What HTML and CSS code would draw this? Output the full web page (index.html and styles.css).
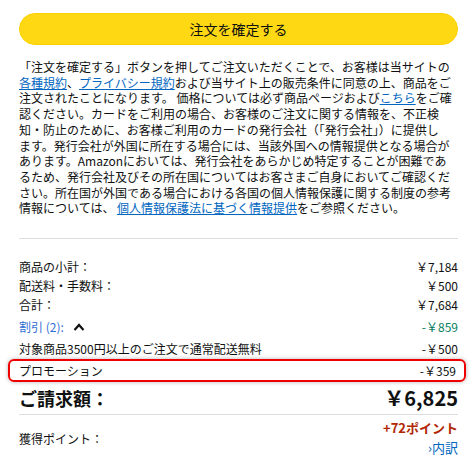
FILE: index.html
```html
<!DOCTYPE html>
<html lang="ja">
<head>
    <meta charset="UTF-8">
    <meta name="viewport" content="width=device-width, initial-scale=1.0">
    <title>注文の確定</title>
    <link rel="stylesheet" href="styles.css">
</head>
<body>
    <div class="checkout">
        <button class="place-order">注文を確定する</button>

        <p class="legal">
            「注文を確定する」ボタンを押してご注文いただくことで、お客様は当サイトの<br>
            <a href="#">各種規約</a>、<a href="#">プライバシー規約</a>および当サイト上の販売条件に同意の上、商品をご<br>
            注文されたことになります。 価格については必ず商品ページおよび<a href="#">こちら</a>をご確<br>
            認ください。カードをご利用の場合、お客様のご注文に関する情報を、不正検<br>
            知・防止のために、お客様ご利用のカードの発行会社（「発行会社」）に提供し<br>
            ます。発行会社が外国に所在する場合には、当該外国への情報提供となる場合が<br>
            あります。Amazonにおいては、発行会社をあらかじめ特定することが困難であ<br>
            るため、発行会社及びその所在国についてはお客さまご自身においてご確認くだ<br>
            さい。所在国が外国である場合における各国の個人情報保護に関する制度の参考<br>
            情報については、 <a href="#">個人情報保護法に基づく情報提供</a>をご参照ください。
        </p>

        <div class="summary">
            <div class="row">
                <span>商品の小計：</span>
                <span>￥7,184</span>
            </div>
            <div class="row">
                <span>配送料・手数料：</span>
                <span>￥500</span>
            </div>
            <div class="row">
                <span>合計：</span>
                <span>￥7,684</span>
            </div>
            <div class="row row-discount">
                <span class="discount-toggle">割引 (2):
                    <svg width="12" height="8" viewBox="0 0 12 8"><polyline points="1.5,7 6,2 10.5,7" fill="none" stroke="#0f1111" stroke-width="2.2"/></svg>
                </span>
                <span class="green">-￥859</span>
            </div>
            <div class="row row-item">
                <span>対象商品3500円以上のご注文で通常配送無料</span>
                <span>-￥500</span>
            </div>
            <div class="row row-promo">
                <span>プロモーション</span>
                <span>-￥359</span>
            </div>
            <div class="row row-total">
                <span>ご請求額：</span>
                <span class="total-price">￥6,825</span>
            </div>
        </div>

        <div class="points">
            <span>獲得ポイント：</span>
            <div class="points-right">
                <span class="points-value">+72ポイント</span>
                <a href="#" class="points-link">›内訳</a>
            </div>
        </div>
    </div>
</body>
</html>
```

FILE: styles.css
```css
body{
    margin: 0;
    background: #fff;
    color: #0f1111;
    font-family: "Noto Sans CJK JP", "Noto Sans", sans-serif;
}
.checkout{
    width: 439px;
    padding: 13px 15px 0 19px;
}
.place-order{
    display: block;
    width: 100%;
    height: 32px;
    border: 1px solid #fcd200;
    border-radius: 16px;
    background: #ffd814;
    color: #0f1111;
    font-family: inherit;
    font-size: 14px;
    padding: 0;
    cursor: pointer;
}
.legal{
    margin: 14px 0 0;
    font-size: 12px;
    line-height: 15.7px;
    padding-bottom: 22px;
    border-bottom: 1px solid #dddddd;
}
.legal a, .points-link{
    color: #0066c0;
}
.summary{
    padding-top: 19px;
    display: flex;
    flex-direction: column;
    font-size: 12px;
}
.row{
    display: flex;
    justify-content: space-between;
    height: 18px;
    line-height: 18px;
}
.row + .row{
    margin-top: 1px;
}
.row-discount, .row-item{
    margin-top: 4px !important;
}
.discount-toggle{
    color: #2f6fd6;
    display: flex;
    align-items: center;
    gap: 9px;
}
.green{
    color: #067d62;
}
.row-promo{
    height: 19px;
    line-height: 19px;
    margin: 1px -8px 0 -11px;
    padding: 0 8px 0 9px;
    border: 2px solid #ee0000;
    border-radius: 6px;
    box-shadow: 0 0 4px rgba(0, 0, 0, 0.3);
}
.row-total{
    margin-top: 4px !important;
    height: 24px;
    line-height: 24px;
    font-weight: bold;
    font-size: 18px;
    padding-bottom: 4px;
    border-bottom: 1px solid #dddddd;
}
.total-price{
    font-size: 20px;
}
.points{
    display: flex;
    justify-content: space-between;
    align-items: center;
    padding-top: 5px;
    font-size: 12px;
}
.points-right{
    display: flex;
    flex-direction: column;
    align-items: flex-end;
    line-height: 16px;
    gap: 4px;
}
.points-value{
    color: #b12704;
    font-weight: bold;
    font-size: 13px;
}
.points-link{
    text-decoration: none;
    font-size: 13px;
}
```
